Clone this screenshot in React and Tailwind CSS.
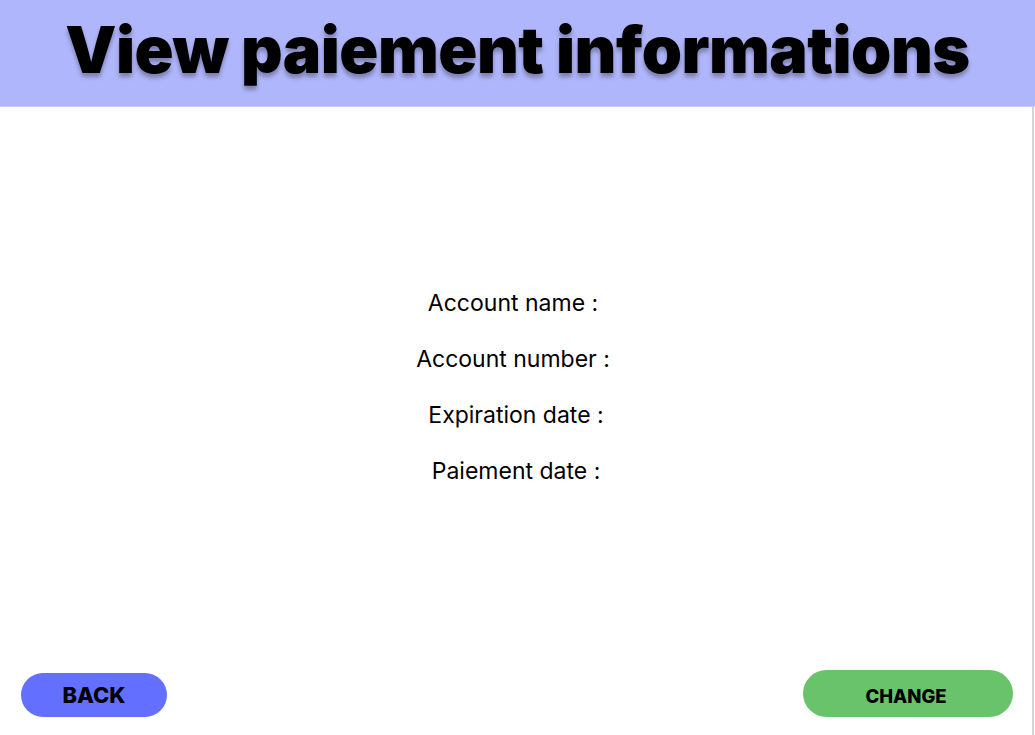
export default function App() {
  return (
    <div className="w-[1035px] h-[735px] bg-white flex flex-col overflow-hidden" style={{ fontFamily: "Inter, 'Noto Sans', sans-serif" }}>
      <header className="h-[107px] bg-[#b0b6fb] border-b border-[#c9cdfc] flex items-center justify-center shrink-0">
        <h1 className="text-[64.5px] font-black text-black tracking-[-0.5px] leading-none pb-[6px] [text-shadow:0_4px_4px_rgba(0,0,0,0.3)]">
          View paiement informations
        </h1>
      </header>
      <main className="flex-1 flex flex-col border-r-[2px] border-[#d4d4d4] mr-[1px]">
        <div className="flex flex-col items-center pt-[182px] gap-[28px] text-[23px] leading-[28px] text-black pl-[4px]">
          <p className="pr-[10px]">Account name :</p>
          <p className="pr-[10px]">Account number :</p>
          <p className="pr-[4px]">Expiration date :</p>
          <p className="pr-[4px]">Paiement date :</p>
        </div>
        <div className="mt-auto flex items-end justify-between pl-[21px] pr-[19px] pb-[18px]">
          <button className="w-[146px] h-[44px] rounded-full bg-[#6370ff] text-black font-extrabold text-[22px] flex items-center justify-center">
            BACK
          </button>
          <button className="w-[210px] h-[47px] rounded-full bg-[#68c36a] text-black font-extrabold text-[18.5px] flex items-center justify-center pt-[7px] pr-[4px]">
            CHANGE
          </button>
        </div>
      </main>
    </div>
  );
}
